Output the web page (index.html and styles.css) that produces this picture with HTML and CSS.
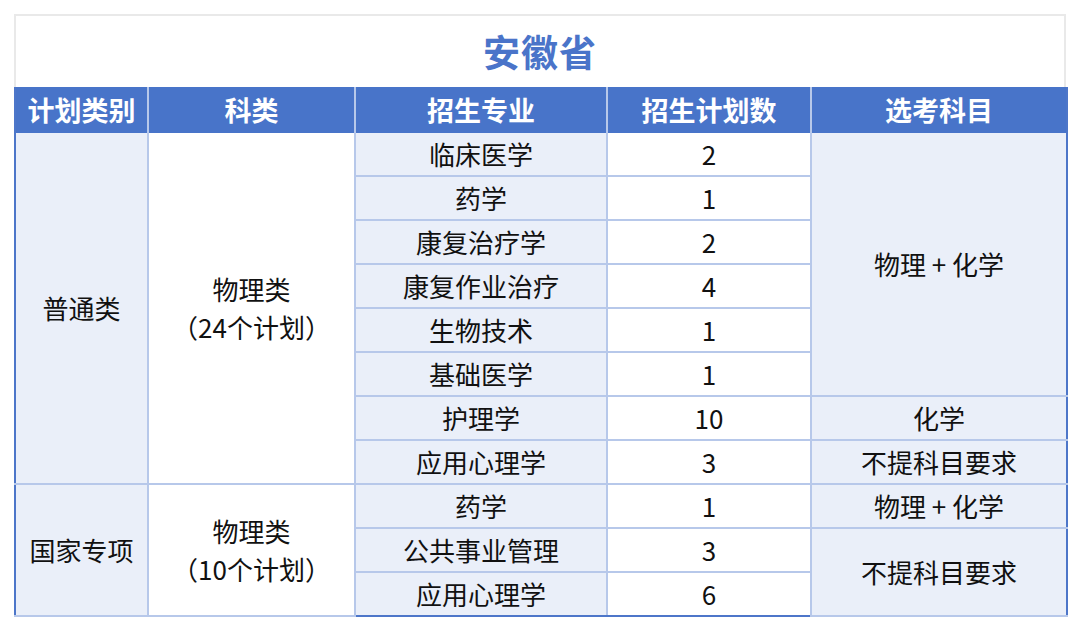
FILE: index.html
```html
<!DOCTYPE html>
<html lang="zh-CN">
<head>
<meta charset="utf-8">
<title>安徽省</title>
<link rel="stylesheet" href="styles.css">
</head>
<body>
<div class="sheet">
  <div class="title">安徽省</div>
  <table class="plan">
    <colgroup>
      <col class="c1"><col class="c2"><col class="c3"><col class="c4"><col class="c5">
    </colgroup>
    <thead>
      <tr><th>计划类别</th><th>科类</th><th>招生专业</th><th>招生计划数</th><th>选考科目</th></tr>
    </thead>
    <tbody>
      <tr><td class="tint" rowspan="8">普通类</td><td rowspan="8">物理类<br>（24个计划）</td><td class="tint">临床医学</td><td>2</td><td class="tint" rowspan="6">物理 + 化学</td></tr>
      <tr><td class="tint">药学</td><td>1</td></tr>
      <tr><td class="tint">康复治疗学</td><td>2</td></tr>
      <tr><td class="tint">康复作业治疗</td><td>4</td></tr>
      <tr><td class="tint">生物技术</td><td>1</td></tr>
      <tr><td class="tint">基础医学</td><td>1</td></tr>
      <tr><td class="tint">护理学</td><td>10</td><td class="tint">化学</td></tr>
      <tr><td class="tint">应用心理学</td><td>3</td><td class="tint">不提科目要求</td></tr>
      <tr class="group"><td class="tint" rowspan="3">国家专项</td><td rowspan="3">物理类<br>（10个计划）</td><td class="tint">药学</td><td>1</td><td class="tint">物理 + 化学</td></tr>
      <tr><td class="tint">公共事业管理</td><td>3</td><td class="tint" rowspan="2">不提科目要求</td></tr>
      <tr><td class="tint">应用心理学</td><td>6</td></tr>
    </tbody>
  </table>
</div>
</body>
</html>
```

FILE: styles.css
```css
html, body {
  margin: 0;
  padding: 0;
  background: #ffffff;
}

body {
  font-family: "Noto Sans CJK SC", "Noto Sans", sans-serif;
  color: #111111;
}

.sheet {
  width: 1052px;
  margin: 14px 0 0 14px;
}

.title {
  height: 71px;
  border: 2px solid #e9e9e9;
  border-bottom: none;
  box-sizing: content-box;
  display: flex;
  align-items: center;
  justify-content: center;
  font-size: 37px;
  font-weight: 700;
  color: #4a74c9;
  letter-spacing: 1px;
  padding-bottom: 0;
  line-height: 1;
}

.title-text { display: block; }

.plan {
  width: 1052px;
  border-collapse: collapse;
  table-layout: fixed;
  border: 2px solid #4d76c9;
  border-top: none;
}

.c1 { width: 133px; }
.c2 { width: 207px; }
.c3 { width: 252px; }
.c4 { width: 204px; }
.c5 { width: 256px; }

.plan th {
  height: 46px;
  padding: 0;
  background: #4874c9;
  color: #ffffff;
  font-size: 27px;
  font-weight: 700;
  border-left: 2px solid #b7c8ea;
  border-right: 2px solid #b7c8ea;
  text-align: center;
  line-height: 40px;
}

.plan th:first-child { border-left-color: #4d76c9; }
.plan th:last-child { border-right-color: #4d76c9; }

.plan td {
  height: 42px;
  padding: 0;
  border: 2px solid #b7c8ea;
  text-align: center;
  vertical-align: middle;
  font-size: 26px;
  line-height: 38px;
  background: #ffffff;
}

.plan td.tint {
  background: #eaeff9;
}

.plan tbody tr:first-child td { border-top: none; }
.plan tr td:first-child { border-left-color: #4d76c9; }
.plan tr td:last-child { border-right-color: #4d76c9; }
.plan tbody tr:last-child td { border-bottom-color: #4d76c9; }
```
